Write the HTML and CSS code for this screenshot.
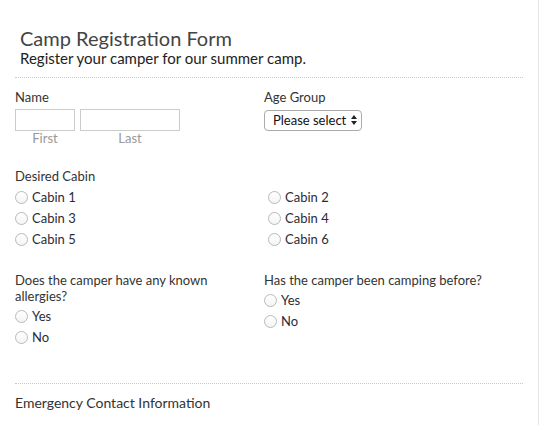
FILE: index.html
```html
<!DOCTYPE html>
<html>
<head>
    <title>Camp Registration Form</title>
    <link rel="stylesheet" href="styles.css">
</head>
<body>
    <div class="page">
        <div class="form-header">
            <h1 class="form-title">Camp Registration Form</h1>
            <p class="form-desc">Register your camper for our summer camp.</p>
        </div>

        <div class="row row-first">
            <div class="field">
                <div class="field-label">Name</div>
                <div class="name-inputs">
                    <div class="name-part name-first">
                        <input type="text" class="text-input">
                        <span class="sublabel">First</span>
                    </div>
                    <div class="name-part name-last">
                        <input type="text" class="text-input">
                        <span class="sublabel">Last</span>
                    </div>
                </div>
            </div>
            <div class="field">
                <div class="field-label">Age Group</div>
                <div class="select-box">
                    <span class="select-text">Please select</span>
                    <svg class="select-arrows" width="6" height="10" viewBox="0 0 6 10">
                        <path d="M0 4 L3 0 L6 4 Z" fill="#222"/>
                        <path d="M0 6 L3 10 L6 6 Z" fill="#222"/>
                    </svg>
                </div>
            </div>
        </div>

        <div class="field field-wide">
            <div class="field-label label-tight">Desired Cabin</div>
            <div class="options options-cabins">
                <label class="option"><input type="radio" name="cabin"> Cabin 1</label>
                <label class="option"><input type="radio" name="cabin"> Cabin 2</label>
                <label class="option"><input type="radio" name="cabin"> Cabin 3</label>
                <label class="option"><input type="radio" name="cabin"> Cabin 4</label>
                <label class="option"><input type="radio" name="cabin"> Cabin 5</label>
                <label class="option"><input type="radio" name="cabin"> Cabin 6</label>
            </div>
        </div>

        <div class="row row-questions">
            <div class="field field-question">
                <div class="field-label label-tight">Does the camper have any known allergies?</div>
                <div class="options">
                    <label class="option"><input type="radio" name="allergies"> Yes</label>
                    <label class="option"><input type="radio" name="allergies"> No</label>
                </div>
            </div>
            <div class="field">
                <div class="field-label label-tight">Has the camper been camping before?</div>
                <div class="options">
                    <label class="option"><input type="radio" name="camped"> Yes</label>
                    <label class="option"><input type="radio" name="camped"> No</label>
                </div>
            </div>
        </div>

        <div class="section-break">
            <h2 class="section-title">Emergency Contact Information</h2>
        </div>
    </div>
</body>
</html>
```

FILE: styles.css
```css
body {
    margin: 0;
    background-color: #fff;
    font-family: Lato, "Open Sans", sans-serif;
    color: #333;
}
.page {
    width: 508px;
    height: 425px;
    padding: 0 15px;
    border-right: 1px solid #e4e4e4;
    overflow: hidden;
}
.form-header {
    padding: 26px 0 10px 5px;
    border-bottom: 1px dotted #c8c8c8;
}
.form-title {
    margin: 0;
    font-size: 20px;
    line-height: 24px;
    font-weight: normal;
    color: #444;
}
.form-desc {
    margin: 0;
    font-size: 15px;
    line-height: 17px;
    color: #222;
}
.row {
    display: grid;
    grid-template-columns: 249px 1fr;
}
.row-first {
    padding-top: 11px;
}
.field-wide {
    margin-top: 22px;
}
.row-questions {
    margin-top: 23px;
}
.field-question {
    padding-right: 20px;
}
.field-label {
    font-size: 13px;
    line-height: 16px;
    color: #333;
    margin-bottom: 4px;
}
.label-tight {
    margin-bottom: 2px;
}
.row-questions .label-tight {
    margin-bottom: 1px;
}
.name-inputs {
    display: flex;
    gap: 5px;
}
.name-part {
    display: flex;
    flex-direction: column;
}
.name-first {
    width: 60px;
}
.name-last {
    width: 100px;
}
.text-input {
    box-sizing: border-box;
    width: 100%;
    height: 22px;
    margin: 0;
    border: 1px solid #ccc;
    border-radius: 0;
    padding: 2px 4px;
}
.sublabel {
    font-size: 13px;
    line-height: 15px;
    color: #999;
    text-align: center;
}
.select-box {
    box-sizing: border-box;
    display: inline-flex;
    align-items: center;
    height: 21px;
    padding: 0 4px 0 8px;
    border: 1px solid #aaa;
    border-radius: 4px;
    background-color: #fff;
    font-size: 13px;
    color: #111;
}
.select-text {
    margin-right: 5px;
}
.options {
    display: flex;
    flex-direction: column;
}
.options-cabins {
    display: grid;
    grid-template-columns: 253px 1fr;
}
.option {
    display: flex;
    align-items: center;
    gap: 4px;
    height: 21px;
    font-size: 13px;
    color: #2b2b36;
}
.option input[type="radio"] {
    appearance: none;
    -webkit-appearance: none;
    box-sizing: border-box;
    width: 13px;
    height: 13px;
    margin: 1px 0 0 0;
    border: 1px solid #b9b9b9;
    border-radius: 50%;
    background: linear-gradient(#fff, #f4f4f4);
}
.section-break {
    margin-top: 36px;
    padding-top: 10px;
    border-top: 1px dotted #c8c8c8;
}
.section-title {
    margin: 0;
    font-size: 14px;
    line-height: 17px;
    font-weight: normal;
    color: #333;
}
```
